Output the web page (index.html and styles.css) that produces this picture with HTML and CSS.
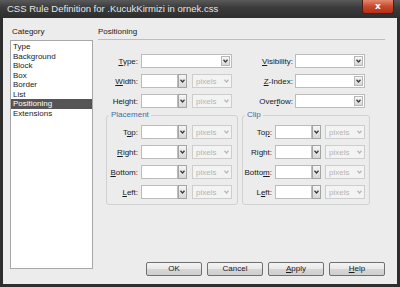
FILE: index.html
```html
<!DOCTYPE html>
<html>
<head>
<meta charset="utf-8">
<title>CSS Rule Definition</title>
<link rel="stylesheet" href="styles.css">
</head>
<body>
<div class="window">
  <div class="titlebar">
    <span class="title">CSS Rule Definition for .KucukKirmizi in ornek.css</span>
    <span class="close">x</span>
  </div>
  <div class="body">
    <div class="catcol">
      <div class="head">Category</div>
      <ul class="list">
        <li>Type</li>
        <li>Background</li>
        <li>Block</li>
        <li>Box</li>
        <li>Border</li>
        <li>List</li>
        <li class="sel">Positioning</li>
        <li>Extensions</li>
      </ul>
    </div>
    <div class="panel">
      <div class="head line">Positioning</div>
      <div class="topgrid">
        <label><u>T</u>ype:</label>
        <span class="combo wide"><span class="field"></span><span class="arrow"><svg width="5" height="4" viewBox="0 0 5 4"><path d="M0.5 0.8 L2.5 3 L4.5 0.8" /></svg></span></span>
        <label><u>V</u>isibility:</label>
        <span class="combo right"><span class="field"></span><span class="arrow"><svg width="5" height="4" viewBox="0 0 5 4"><path d="M0.5 0.8 L2.5 3 L4.5 0.8" /></svg></span></span>

        <label><u>W</u>idth:</label>
        <span class="pair"><span class="combo"><span class="field"></span><span class="arrow btn"><svg width="5" height="4" viewBox="0 0 5 4"><path d="M0.5 0.8 L2.5 3 L4.5 0.8" /></svg></span></span><span class="units">pixels<svg width="5" height="4" viewBox="0 0 5 4"><path d="M0.5 0.8 L2.5 3 L4.5 0.8" /></svg></span></span>
        <label><u>Z</u>-Index:</label>
        <span class="combo right"><span class="field"></span><span class="arrow"><svg width="5" height="4" viewBox="0 0 5 4"><path d="M0.5 0.8 L2.5 3 L4.5 0.8" /></svg></span></span>

        <label>Hei<u>g</u>ht:</label>
        <span class="pair"><span class="combo"><span class="field"></span><span class="arrow btn"><svg width="5" height="4" viewBox="0 0 5 4"><path d="M0.5 0.8 L2.5 3 L4.5 0.8" /></svg></span></span><span class="units">pixels<svg width="5" height="4" viewBox="0 0 5 4"><path d="M0.5 0.8 L2.5 3 L4.5 0.8" /></svg></span></span>
        <label>Over<u>f</u>low:</label>
        <span class="combo right"><span class="field"></span><span class="arrow"><svg width="5" height="4" viewBox="0 0 5 4"><path d="M0.5 0.8 L2.5 3 L4.5 0.8" /></svg></span></span>
      </div>

      <div class="groups">
        <fieldset class="placement">
          <legend>Placement</legend>
          <div class="frow"><label>T<u>o</u>p:</label><span class="combo"><span class="field"></span><span class="arrow btn"><svg width="5" height="4" viewBox="0 0 5 4"><path d="M0.5 0.8 L2.5 3 L4.5 0.8" /></svg></span></span><span class="units">pixels<svg width="5" height="4" viewBox="0 0 5 4"><path d="M0.5 0.8 L2.5 3 L4.5 0.8" /></svg></span></div>
          <div class="frow"><label><u>R</u>ight:</label><span class="combo"><span class="field"></span><span class="arrow btn"><svg width="5" height="4" viewBox="0 0 5 4"><path d="M0.5 0.8 L2.5 3 L4.5 0.8" /></svg></span></span><span class="units">pixels<svg width="5" height="4" viewBox="0 0 5 4"><path d="M0.5 0.8 L2.5 3 L4.5 0.8" /></svg></span></div>
          <div class="frow"><label><u>B</u>ottom:</label><span class="combo"><span class="field"></span><span class="arrow btn"><svg width="5" height="4" viewBox="0 0 5 4"><path d="M0.5 0.8 L2.5 3 L4.5 0.8" /></svg></span></span><span class="units">pixels<svg width="5" height="4" viewBox="0 0 5 4"><path d="M0.5 0.8 L2.5 3 L4.5 0.8" /></svg></span></div>
          <div class="frow"><label><u>L</u>eft:</label><span class="combo"><span class="field"></span><span class="arrow btn"><svg width="5" height="4" viewBox="0 0 5 4"><path d="M0.5 0.8 L2.5 3 L4.5 0.8" /></svg></span></span><span class="units">pixels<svg width="5" height="4" viewBox="0 0 5 4"><path d="M0.5 0.8 L2.5 3 L4.5 0.8" /></svg></span></div>
        </fieldset>
        <fieldset class="clip">
          <legend>Clip</legend>
          <div class="frow"><label>To<u>p</u>:</label><span class="combo"><span class="field"></span><span class="arrow btn"><svg width="5" height="4" viewBox="0 0 5 4"><path d="M0.5 0.8 L2.5 3 L4.5 0.8" /></svg></span></span><span class="units">pixels<svg width="5" height="4" viewBox="0 0 5 4"><path d="M0.5 0.8 L2.5 3 L4.5 0.8" /></svg></span></div>
          <div class="frow"><label>Ri<u>g</u>ht:</label><span class="combo"><span class="field"></span><span class="arrow btn"><svg width="5" height="4" viewBox="0 0 5 4"><path d="M0.5 0.8 L2.5 3 L4.5 0.8" /></svg></span></span><span class="units">pixels<svg width="5" height="4" viewBox="0 0 5 4"><path d="M0.5 0.8 L2.5 3 L4.5 0.8" /></svg></span></div>
          <div class="frow"><label>Botto<u>m</u>:</label><span class="combo"><span class="field"></span><span class="arrow btn"><svg width="5" height="4" viewBox="0 0 5 4"><path d="M0.5 0.8 L2.5 3 L4.5 0.8" /></svg></span></span><span class="units">pixels<svg width="5" height="4" viewBox="0 0 5 4"><path d="M0.5 0.8 L2.5 3 L4.5 0.8" /></svg></span></div>
          <div class="frow"><label>L<u>e</u>ft:</label><span class="combo"><span class="field"></span><span class="arrow btn"><svg width="5" height="4" viewBox="0 0 5 4"><path d="M0.5 0.8 L2.5 3 L4.5 0.8" /></svg></span></span><span class="units">pixels<svg width="5" height="4" viewBox="0 0 5 4"><path d="M0.5 0.8 L2.5 3 L4.5 0.8" /></svg></span></div>
        </fieldset>
      </div>

      <div class="buttons">
        <span class="button">OK</span>
        <span class="button">Cancel</span>
        <span class="button"><u>A</u>pply</span>
        <span class="button"><u>H</u>elp</span>
      </div>
    </div>
  </div>
</div>
</body>
</html>
```

FILE: styles.css
```css
body {
  margin: 0;
  background: #ececec;
  font-family: "Liberation Sans", Arial, sans-serif;
  font-size: 8px;
  color: #1a1a1a;
}
.window {
  width: 400px;
  height: 287px;
  display: flex;
  flex-direction: column;
}
.titlebar {
  height: 18px;
  flex: none;
  display: flex;
  align-items: flex-start;
  justify-content: space-between;
  background: linear-gradient(to bottom, #5a5a5a 0, #3c3c3c 40%, #2e2e2e 100%);
}
.title {
  padding: 3px 0 0 7px;
  font-size: 9.5px;
  line-height: 12px;
  color: #e6e6e6;
}
.close {
  width: 32px;
  height: 14px;
  margin-right: 6px;
  box-sizing: border-box;
  border: 1px solid #5a1a0e;
  border-top: 0;
  border-radius: 0 0 3px 3px;
  background: linear-gradient(to bottom, #e08a6e 0, #c9482c 50%, #b3301a 100%);
  color: #fff;
  font-family: "DejaVu Sans", sans-serif;
  font-weight: bold;
  font-size: 9px;
  line-height: 12px;
  text-align: center;
}
.body {
  flex: 1;
  display: flex;
  background: #ececec;
  border: 3px solid #2e2e2e;
  border-top: 0;
  padding: 9px 6px 8px 7px;
}
.head {
  line-height: 10px;
  padding-left: 2px;
  margin-bottom: 3px;
}
.head.line {
  padding-left: 0;
  height: 12px;
  margin-bottom: 0;
  border-bottom: 1px solid #bdbdbd;
}
.catcol {
  width: 83px;
  display: flex;
  flex-direction: column;
}
.list {
  flex: 1;
  margin: 0 0 7px;
  padding: 1px 0 0;
  list-style: none;
  background: #fff;
  border: 1px solid #a8a8a8;
}
.list li {
  line-height: 9.5px;
  padding-left: 2px;
}
.list li.sel {
  background: #555;
  color: #fff;
}
.panel {
  flex: 1;
  margin-left: 5px;
  margin-right: 6px;
  display: flex;
  flex-direction: column;
}
label {
  text-align: right;
  white-space: nowrap;
}
.topgrid {
  margin-top: 11px;
  display: grid;
  grid-template-columns: 43px 91px 63px 70px;
  grid-auto-rows: 20px;
  align-items: center;
}
.topgrid label {
  padding-right: 3px;
}
.topgrid label:nth-child(4n+3) {
  padding-right: 2px;
}
.combo {
  display: flex;
  height: 14px;
}
.field {
  width: 37px;
  box-sizing: border-box;
  background: #fff;
  border: 1px solid #bcbcbc;
}
.arrow {
  width: 9px;
  box-sizing: border-box;
  display: flex;
  align-items: center;
  justify-content: center;
  border: 1px solid #a4a4a4;
  background: linear-gradient(to bottom, #f6f6f6, #d8d8d8);
}
.arrow svg path,
.units svg path {
  fill: none;
  stroke: #3a3a3a;
  stroke-width: 1.3;
}
.combo.wide,
.combo.right {
  background: #fff;
  border: 1px solid #bcbcbc;
  box-sizing: border-box;
  justify-content: flex-end;
  padding: 1px;
}
.combo.wide .field,
.combo.right .field {
  display: none;
}
.combo.wide .arrow,
.combo.right .arrow {
  width: 9px;
  border-color: #b8b8b8;
}
.pair {
  display: flex;
  align-items: center;
}
.units {
  width: 40px;
  height: 14px;
  margin-left: 5px;
  box-sizing: border-box;
  display: flex;
  align-items: center;
  justify-content: space-between;
  padding: 0 2px 0 3px;
  background: #f3f3f3;
  border: 1px solid #cdcdcd;
  color: #b4b4b4;
}
.units svg path {
  stroke: #b8b8b8;
}
.groups {
  display: flex;
  margin-top: -1px;
}
fieldset {
  margin: 0;
  padding: 2px 0 2px;
  border: 1px solid #d2d2d2;
  border-radius: 3px;
}
legend {
  padding: 0 2px;
  margin-left: 2px;
  line-height: 10px;
  color: #3a6fa8;
}
.placement {
  margin-left: 8px;
  width: 132px;
  box-sizing: border-box;
}
.clip {
  margin-left: 4px;
  width: 128px;
  box-sizing: border-box;
}
.frow {
  height: 20px;
  display: flex;
  align-items: center;
}
.frow label {
  width: 34px;
  box-sizing: border-box;
  padding-right: 3px;
}
.clip .frow label {
  width: 32px;
}
.clip .frow .units {
  margin-left: 4px;
}
.buttons {
  margin-top: auto;
  display: flex;
  justify-content: flex-end;
  gap: 5px;
}
.button {
  width: 56px;
  height: 14px;
  box-sizing: border-box;
  border: 1px solid #707070;
  border-radius: 2px;
  background: linear-gradient(to bottom, #f4f4f4 0, #e8e8e8 50%, #d6d6d6 51%, #cfcfcf 100%);
  text-align: center;
  line-height: 12px;
}
```
